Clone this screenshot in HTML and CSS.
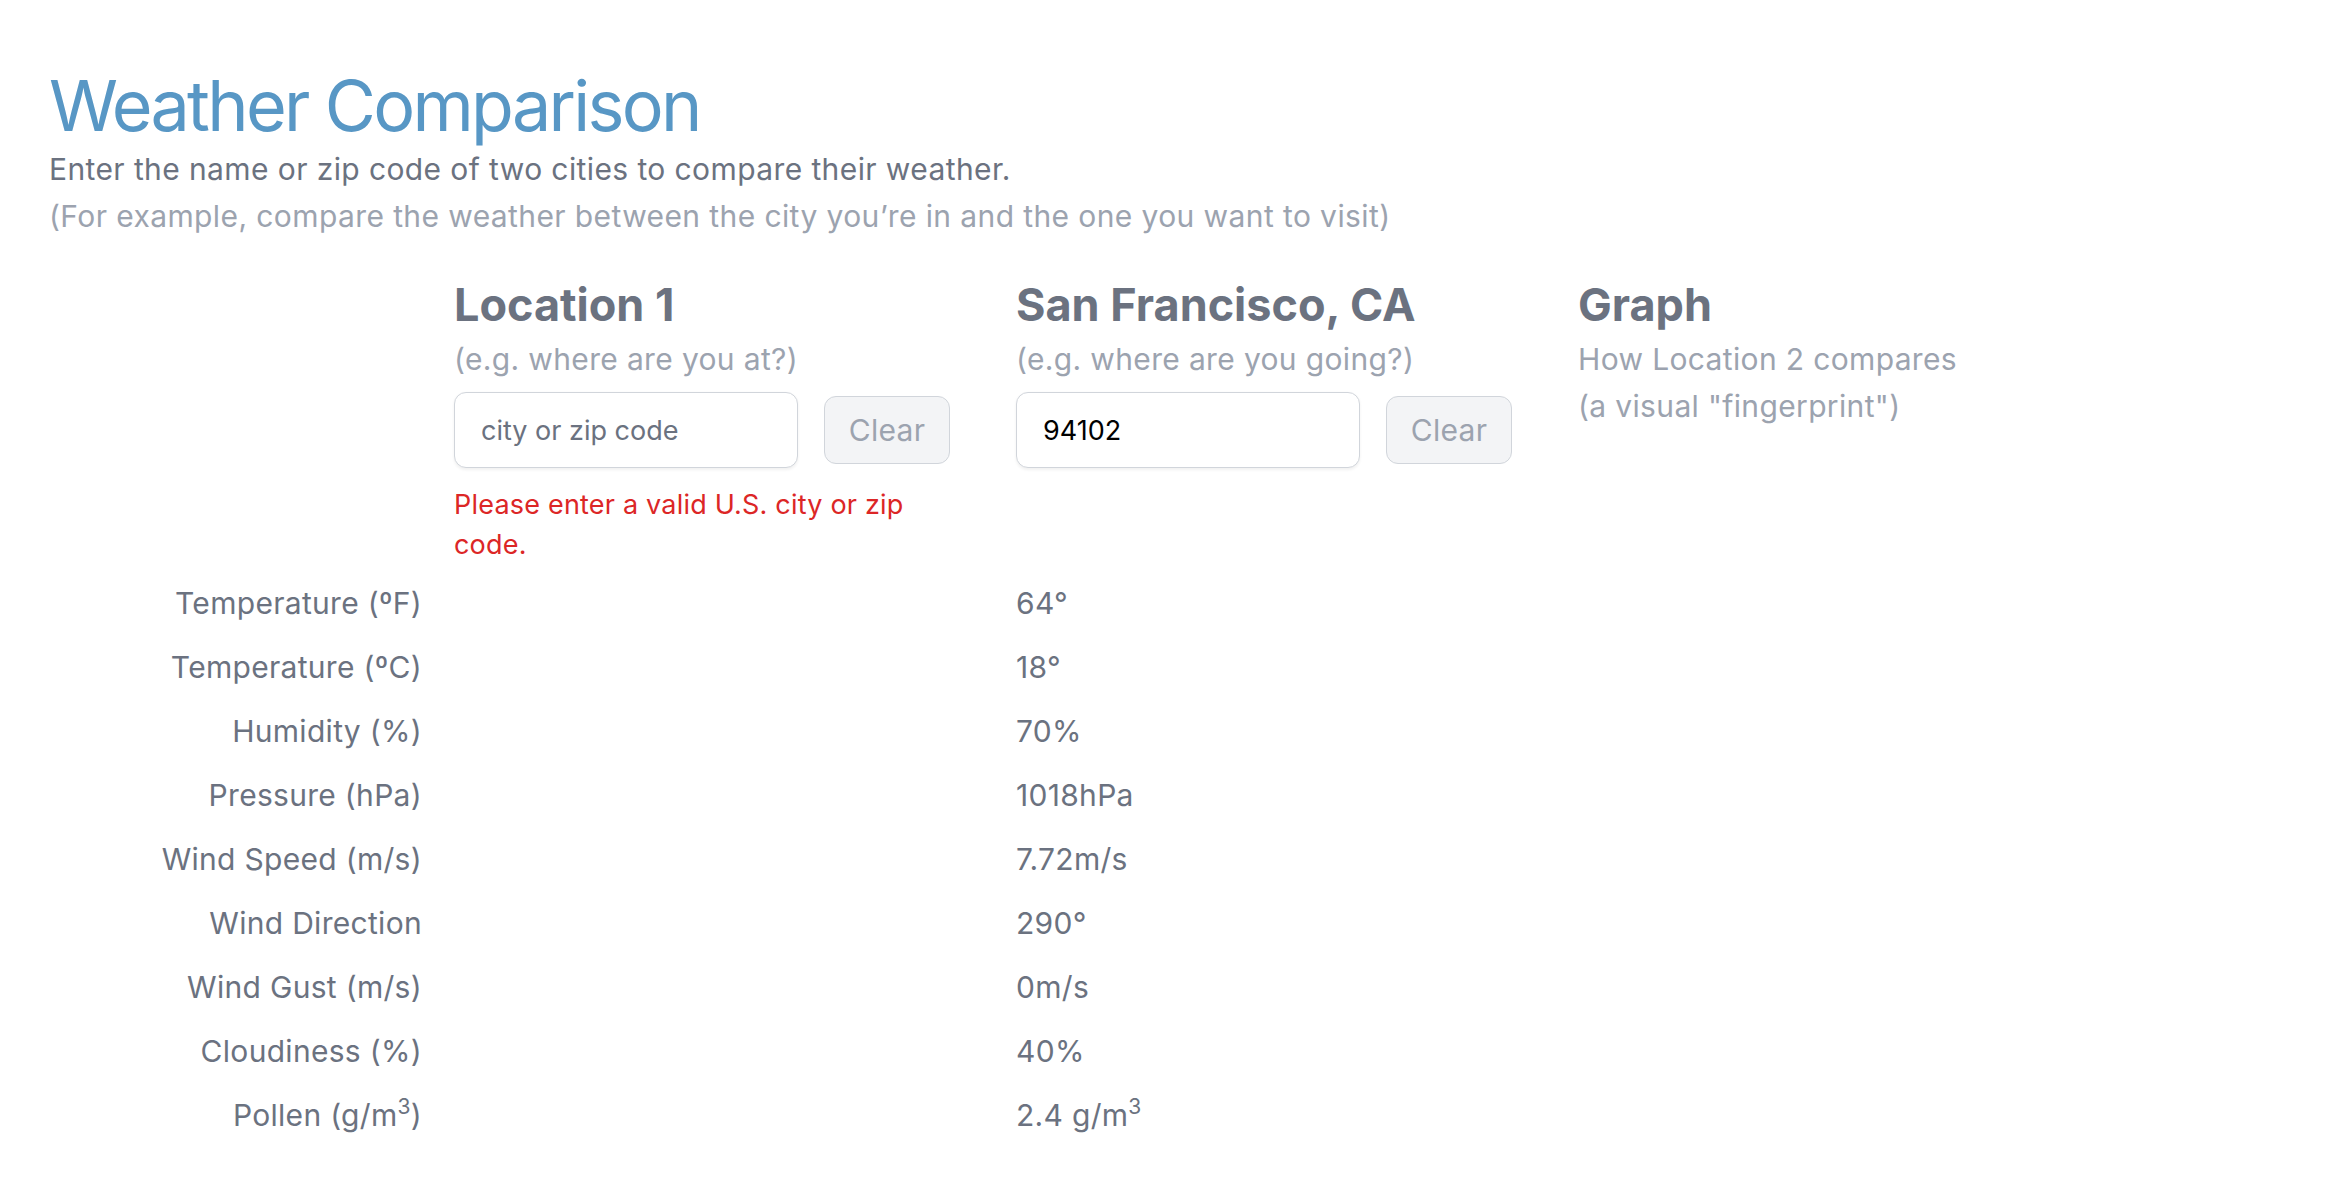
FILE: index.html
```html
<!DOCTYPE html>
<html lang="en">
<head>
<meta charset="utf-8">
<title>Weather Comparison</title>
<link rel="stylesheet" href="styles.css">
</head>
<body>
<main class="page">
  <h1 class="title">Weather Comparison</h1>
  <p class="lead">Enter the name or zip code of two cities to compare their weather.</p>
  <p class="lead-muted">(For example, compare the weather between the city you’re in and the one you want to visit)</p>

  <section class="grid">
    <div class="cell-empty"></div>
    <div class="loc">
      <h2 class="loc-title">Location 1</h2>
      <p class="loc-sub">(e.g. where are you at?)</p>
      <div class="loc-form">
        <div class="field-row">
          <input class="field" type="text" placeholder="city or zip code">
          <button class="clear" type="button">Clear</button>
        </div>
        <p class="error">Please enter a valid U.S. city or zip code.</p>
      </div>
    </div>
    <div class="loc">
      <h2 class="loc-title">San Francisco, CA</h2>
      <p class="loc-sub">(e.g. where are you going?)</p>
      <div class="loc-form">
        <div class="field-row">
          <input class="field" type="text" value="94102" placeholder="city or zip code">
          <button class="clear" type="button">Clear</button>
        </div>
      </div>
    </div>
    <div class="loc">
      <h2 class="loc-title">Graph</h2>
      <p class="loc-sub">How Location 2 compares</p>
      <p class="loc-sub">(a visual "fingerprint")</p>
    </div>

    <div class="label first">Temperature (ºF)</div><div class="value first"></div><div class="value first">64°</div><div class="value first"></div>
    <div class="label">Temperature (ºC)</div><div class="value"></div><div class="value">18°</div><div class="value"></div>
    <div class="label">Humidity (%)</div><div class="value"></div><div class="value">70%</div><div class="value"></div>
    <div class="label">Pressure (hPa)</div><div class="value"></div><div class="value">1018hPa</div><div class="value"></div>
    <div class="label">Wind Speed (m/s)</div><div class="value"></div><div class="value">7.72m/s</div><div class="value"></div>
    <div class="label">Wind Direction</div><div class="value"></div><div class="value">290°</div><div class="value"></div>
    <div class="label">Wind Gust (m/s)</div><div class="value"></div><div class="value">0m/s</div><div class="value"></div>
    <div class="label">Cloudiness (%)</div><div class="value"></div><div class="value">40%</div><div class="value"></div>
    <div class="label">Pollen (g/m<sup>3</sup>)</div><div class="value"></div><div class="value">2.4 g/m<sup>3</sup></div><div class="value"></div>
  </section>
</main>
</body>
</html>
```
FILE: styles.css
```css
* { box-sizing: border-box; }

html, body {
  margin: 0;
  padding: 0;
  background: #ffffff;
}

body {
  font-family: "Inter", "Noto Sans", sans-serif;
  color: #6b7280;
}

.page {
  padding: 70px 0 40px 49px;
}

.title {
  margin: 0;
  font-size: 70px;
  line-height: 72px;
  font-weight: 400;
  color: #5897c5;
  letter-spacing: -2.7px;
}

.lead {
  margin: 4px 0 0;
  font-size: 30px;
  line-height: 47px;
  letter-spacing: 0.4px;
  color: #6b7280;
}

.lead-muted {
  margin: 0;
  font-size: 30px;
  line-height: 47px;
  letter-spacing: 0.4px;
  color: #9ca3af;
}

.grid {
  display: grid;
  grid-template-columns: 405px 562px 562px 1fr;
  margin-top: 38px;
}

.loc-title {
  margin: 0;
  font-size: 45px;
  line-height: 54px;
  font-weight: 700;
  color: #6b7280;
}

.loc-sub {
  margin: 4px 0 0;
  font-size: 30px;
  line-height: 46px;
  letter-spacing: 0.35px;
  color: #9ca3af;
}

.loc-sub + .loc-sub {
  margin-top: 1px;
}

.loc-form {
  width: 497px;
  margin-top: 10px;
}

.field-row {
  display: flex;
  align-items: center;
  gap: 26px;
}

.field {
  width: 344px;
  height: 76px;
  padding: 0 26px;
  border: 1.5px solid #d1d5db;
  border-radius: 12px;
  box-shadow: 0 1.5px 3px rgba(0, 0, 0, 0.06);
  font-family: inherit;
  font-size: 27px;
  color: #000000;
  background: #ffffff;
  outline: none;
}

.field::placeholder {
  color: #6b7280;
  opacity: 1;
}

.clear {
  width: 126px;
  height: 68px;
  padding: 0;
  border: 1.5px solid #d1d5db;
  border-radius: 12px;
  background: #f3f4f6;
  font-family: inherit;
  font-size: 30px;
  letter-spacing: 0.3px;
  color: #9ca3af;
}

.error {
  margin: 17px 0 0;
  font-size: 27px;
  line-height: 40px;
  letter-spacing: 0.2px;
  color: #dc2626;
}

.label,
.value {
  font-size: 30px;
  line-height: 64px;
  height: 64px;
  letter-spacing: 0.3px;
  color: #6b7280;
  white-space: nowrap;
}

.label {
  text-align: right;
  padding-right: 32px;
}

.first {
  margin-top: 6px;
}

sup {
  font-size: 0.7em;
  line-height: 0;
  vertical-align: 0.55em;
}
```
